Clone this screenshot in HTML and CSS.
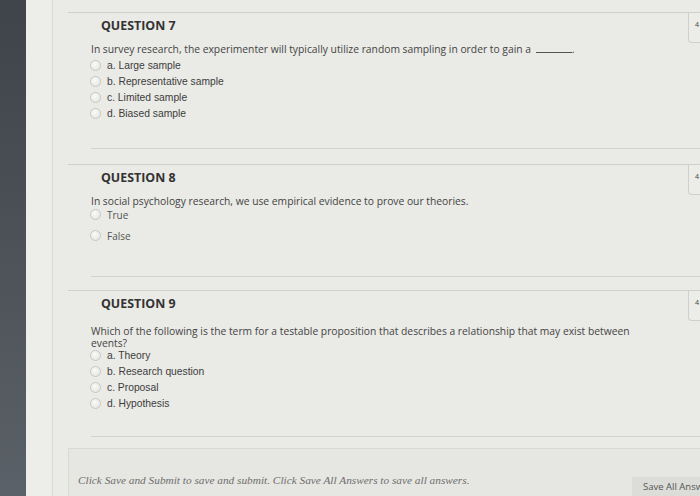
FILE: index.html
```html
<!DOCTYPE html>
<html>
<head>
<meta charset="utf-8">
<link rel="stylesheet" href="styles.css">
</head>
<body>
<div class="page">
  <div class="sidebar"></div>
  <div class="gutter"></div>
  <div class="main">
    <section class="question q7">
      <div class="qhead">
        <h3 class="qtitle">QUESTION 7</h3>
        <div class="points">4</div>
      </div>
      <p class="qtext">In survey research, the experimenter will typically utilize random sampling in order to gain a <span class="blank"></span>.</p>
      <ul class="options mc">
        <li><span class="radio"></span>a. Large sample</li>
        <li><span class="radio"></span>b. Representative sample</li>
        <li><span class="radio"></span>c. Limited sample</li>
        <li><span class="radio"></span>d. Biased sample</li>
      </ul>
      <div class="inner-line"></div>
    </section>
    <section class="question q8">
      <div class="qhead">
        <h3 class="qtitle">QUESTION 8</h3>
        <div class="points">4</div>
      </div>
      <p class="qtext">In social psychology research, we use empirical evidence to prove our theories.</p>
      <ul class="options tf">
        <li><span class="radio"></span>True</li>
        <li><span class="radio"></span>False</li>
      </ul>
      <div class="inner-line"></div>
    </section>
    <section class="question q9">
      <div class="qhead">
        <h3 class="qtitle">QUESTION 9</h3>
        <div class="points">4</div>
      </div>
      <p class="qtext">Which of the following is the term for a testable proposition that describes a relationship that may exist between events?</p>
      <ul class="options mc">
        <li><span class="radio"></span>a. Theory</li>
        <li><span class="radio"></span>b. Research question</li>
        <li><span class="radio"></span>c. Proposal</li>
        <li><span class="radio"></span>d. Hypothesis</li>
      </ul>
      <div class="inner-line"></div>
    </section>
    <footer class="footer">
      <p class="footer-text">Click Save and Submit to save and submit. Click Save All Answers to save all answers.</p>
      <button class="save-btn">Save All Answers</button>
    </footer>
  </div>
</div>
</body>
</html>
```

FILE: styles.css
```css
html, body {
  margin: 0;
  padding: 0;
  width: 700px;
  height: 496px;
  overflow: hidden;
  background: #eaeae6;
}

.page {
  display: flex;
  height: 496px;
}

.sidebar {
  width: 26px;
  flex: none;
  background: linear-gradient(180deg, #3f444a 0%, #4c5258 50%, #5b6168 100%);
}

.gutter {
  width: 26px;
  flex: none;
  background: #ededE9;
  border-right: 1px solid #d9d9d5;
}

.main {
  flex: 1;
  min-width: 0;
  padding-left: 15px;
  padding-top: 12px;
  font-family: "Open Sans", "Liberation Sans", sans-serif;
  color: #454545;
}

.question {
  border-top: 1px solid #cfcfcb;
}

.qhead {
  display: flex;
  align-items: flex-start;
  height: 26px;
}

.qtitle {
  margin: 4px 0 0 33px;
  font-size: 12.4px;
  font-weight: 700;
  color: #333;
}

.points {
  margin-left: auto;
  margin-right: -28px;
  width: 40px;
  height: 30px;
  box-sizing: border-box;
  border: 1px solid #cfcfcb;
  border-top: none;
  border-radius: 0 0 0 4px;
  background: #ececE8;
  font-size: 7px;
  color: #444;
  padding: 7px 0 0 6px;
}

.qtext {
  margin: 0 0 0 23px;
  padding-right: 50px;
  font-size: 10.3px;
  line-height: 11.5px;
  color: #444;
}

.blank {
  display: inline-block;
  width: 36px;
  border-bottom: 1px solid #555;
  margin-left: 2px;
}

.options {
  list-style: none;
  margin: 0;
  padding: 0 0 0 22px;
}

.options li {
  display: flex;
  align-items: center;
  height: 16px;
  font-size: 10.3px;
  color: #3d3d3d;
}

.options.mc li {
  font-family: "Liberation Sans", Arial, sans-serif;
}

.options.tf li {
  font-family: "Open Sans", sans-serif;
  font-size: 10px;
  color: #555;
  height: 21px;
}

.radio {
  width: 9px;
  height: 9px;
  border-radius: 50%;
  border: 1px solid #c6c6c2;
  background: radial-gradient(circle at 40% 35%, #fafaf8, #e2e2de);
  margin-right: 6px;
  flex: none;
}

.inner-line {
  margin-left: 23px;
  border-top: 1px solid #d3d3cf;
}

.q7 .qtext { margin-top: 5px; }
.q7 .options { margin-top: 2px; }
.q7 .inner-line { margin-top: 26px; margin-bottom: 15px; }

.q8 .qtext { margin-top: 5px; }
.q8 .options { margin-top: -3px; }
.q8 .inner-line { margin-top: 30px; margin-bottom: 13px; }

.q9 .qtext { margin-top: 9px; }
.q9 .options { margin-top: -2px; }
.q9 .inner-line { margin-top: 25px; margin-bottom: 11px; }

.footer {
  display: flex;
  align-items: flex-end;
  justify-content: space-between;
  height: 49px;
  box-sizing: border-box;
  background: #e6e6e2;
  border: 1px solid #d9d9d5;
  border-right: none;
  border-bottom: none;
  padding-left: 9px;
}

.footer-text {
  margin: 0 0 11px 0;
  font-family: "Liberation Serif", "Times New Roman", serif;
  font-style: italic;
  font-size: 11.3px;
  color: #6e6e6e;
}

.save-btn {
  flex: none;
  margin-right: -40px;
  width: 108px;
  height: 20px;
  border: none;
  background: #dcdcd8;
  font-family: "Open Sans", sans-serif;
  font-size: 9.5px;
  color: #555;
  text-align: left;
  padding: 0 0 2px 11px;
}
```
